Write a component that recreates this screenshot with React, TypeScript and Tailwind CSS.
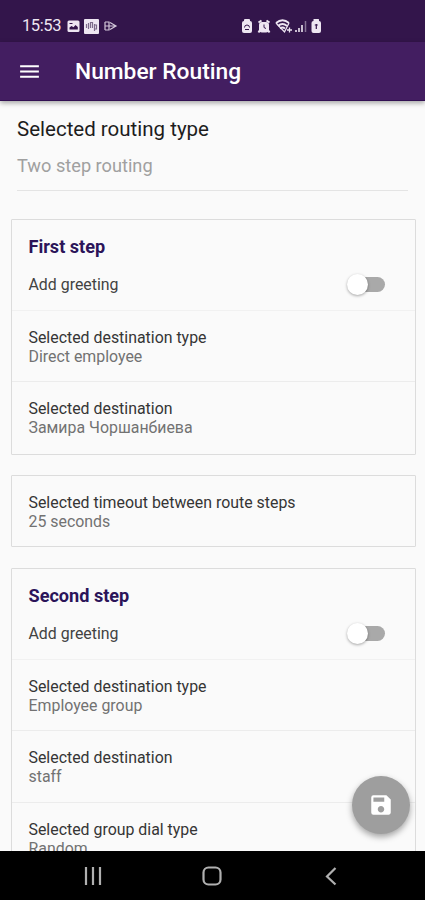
import { MdMenu, MdSave } from "react-icons/md";

interface Row {
  label: string;
  value: string;
}

interface StepCardProps {
  title: string;
  rows: Row[];
}

const firstStep: Row[] = [
  { label: "Selected destination type", value: "Direct employee" },
  { label: "Selected destination", value: "Замира Чоршанбиева" },
];

const secondStep: Row[] = [
  { label: "Selected destination type", value: "Employee group" },
  { label: "Selected destination", value: "staff" },
  { label: "Selected group dial type", value: "Random" },
];

const StatusBar = () => (
  <div className="flex h-[42px] shrink-0 items-center bg-[#33154b] pt-2.5 pl-[22px] text-[#eee6f2]">
    <span className="w-[44px] text-[16.5px] leading-none tracking-[-0.4px]">15:53</span>
    {/* Notifications */}
    <svg className="h-4 w-[52px]" viewBox="0 0 52 16" fill="none">
      <rect x="1.5" y="2.5" width="12" height="11.5" rx="1.5" fill="currentColor" />
      <path d="M3.5 11.5V9.5l2-1.5 2 1.2L9.500 7l2.300 2v2.500z" fill="#33154b" />
      <path d="M3.5 5.5h3" stroke="#33154b" />
      <rect x="18" y="1" width="15" height="15" rx="1" fill="currentColor" />
      <path d="M20.5 10V6m2 5V5m2 5V4.500h2V10m2-4v7m0-6h2v4h-2" stroke="#7d6b8b" strokeWidth="1.2" />
      <path d="M39 4v8M39 4h4v8h-4M39 8h10M44 4.500 50 8l-6 3.500" stroke="currentColor" strokeOpacity=".85" strokeWidth="1.2" />
    </svg>
    {/* System icons */}
    <svg className="ml-[123px] h-4 w-[82px]" viewBox="0 0 82 16" fill="none">
      <rect x="1" y="3" width="10" height="12" rx="2" fill="currentColor" />
      <rect x="3" y="1" width="6" height="3" rx="1" fill="currentColor" />
      <path d="M3.500 9.500a2.500 2.500 0 0 1 5 0M4 11.500h4" stroke="#33154b" />
      <rect x="18" y="4" width="10" height="10.500" rx="3" fill="currentColor" />
      <path d="m17.500 4.500 3-2m8 2-3-2M19 12l-1.500 2.500M27 12l1.500 2.500" stroke="currentColor" strokeWidth="2" />
      <path d="M23 6.500V9.500l2 1" stroke="#33154b" />
      <path d="M35 5q6.500-5.500 13 0M37 8q4.500-4 9 0M39 10.500q2.500-2 5 0" stroke="currentColor" strokeWidth="1.7" />
      <path d="m35 5 8.500 9 4.500-9M46 12h5m-2.500-2.500v5" stroke="currentColor" strokeWidth="1.3" />
      <path d="M55 14v-2m3 2v-4m3 4V7" stroke="currentColor" strokeWidth="1.6" />
      <path d="M64.500 14V3" stroke="currentColor" strokeOpacity=".45" strokeWidth="1.5" />
      <rect x="70.500" y="3" width="9.500" height="12" rx="2" fill="currentColor" />
      <rect x="72.500" y="1" width="5.500" height="3" rx=".5" fill="currentColor" />
      <path d="M75.300 6v5m-1.500-4h3" stroke="#33154b" strokeWidth="1.2" />
    </svg>
  </div>
);

const Toggle = () => (
  <div className="relative mr-[30px] h-[15px] w-[33px] rounded-full bg-[#a9a9a9]">
    <span className="absolute -top-[3px] -left-[5px] size-[21px] rounded-full bg-white shadow-[0_1px_3px_rgba(0,0,0,0.35)]" />
  </div>
);

const SettingRow = ({ label, value }: Row) => (
  <div className="h-[71.5px] pt-[17px] pl-[16.5px] text-[15.9px] leading-[19px]">
    <div className="text-[#353535]">{label}</div>
    <div className="text-[#727272]">{value}</div>
  </div>
);

const StepCard = ({ title, rows }: StepCardProps) => (
  <section className="rounded-[1px] border border-[#dcdcdc]">
    <div className="h-[89.5px] pt-[16px] pl-[16.5px]">
      <h2 className="text-[18.1px] leading-[22px] font-bold text-[#2b1459]">{title}</h2>
      <div className="mt-[16px] flex h-[21px] items-center justify-between text-[15.9px] text-[#424242]">
        <span>Add greeting</span>
        <Toggle />
      </div>
    </div>
    <div className="divide-y divide-[#ececec] border-t border-[#f1f1f1]">
      {rows.map((row) => (
        <SettingRow key={row.label} {...row} />
      ))}
    </div>
  </section>
);

const NavigationBar = () => (
  <nav className="relative flex h-[49px] shrink-0 items-center bg-black text-[#b0b0b0]">
    <svg className="ml-[83px] size-5" viewBox="0 0 20 20" stroke="currentColor" strokeWidth="2.2">
      <path d="M3 1v18M10 1v18M17 1v18" />
    </svg>
    <svg className="ml-[99px] size-5" viewBox="0 0 20 20" fill="none" stroke="currentColor" strokeWidth="2.2">
      <rect x="1.5" y="1.5" width="17" height="17" rx="5" />
    </svg>
    <svg className="ml-[99px] size-5" viewBox="0 0 20 20" fill="none" stroke="currentColor" strokeWidth="2.2">
      <path d="M14.500 2 6 10.500l8.500 8" />
    </svg>
  </nav>
);

export default function App() {
  return (
    <div className="flex h-[900px] w-[425px] flex-col overflow-hidden bg-[#fafafa] font-['Roboto',sans-serif]">
      <StatusBar />

      {/* App bar */}
      <header className="relative z-10 flex h-[59px] shrink-0 items-center border-b border-[#321052] bg-[#431e61] text-white shadow-[0_2px_5px_rgba(0,0,0,0.35)]">
        <MdMenu className="ml-[17px] size-[25px]" />
        <h1 className="ml-[33px] pt-[3px] text-[22.75px] font-medium">Number Routing</h1>
      </header>

      <main className="relative min-h-0 flex-1 overflow-hidden">
        <div className="mx-[17px] h-[90px] border-b border-[#e4e4e4] pt-[15px]">
          <div className="text-[20.5px] leading-[26px] text-[#1d1d1d]">Selected routing type</div>
          <div className="mt-[13px] text-[18.2px] leading-[22px] text-[#a0a0a0]">Two step routing</div>
        </div>

        <div className="mt-[28px] mr-[9px] ml-[11px] flex flex-col gap-[21px]">
          <StepCard title="First step" rows={firstStep} />
          <section className="-mt-[0.5px] h-[72px] rounded-[1px] border border-[#dcdcdc]">
            <SettingRow label="Selected timeout between route steps" value="25 seconds" />
          </section>
          <StepCard title="Second step" rows={secondStep} />
        </div>

        {/* Save button */}
        <button className="absolute top-[675px] left-[351.5px] flex size-[58px] items-center justify-center rounded-full bg-[#9e9e9e] text-white shadow-[0_3px_6px_rgba(0,0,0,0.35)]">
          <MdSave className="size-[26px]" />
        </button>
      </main>

      <NavigationBar />
    </div>
  );
}
